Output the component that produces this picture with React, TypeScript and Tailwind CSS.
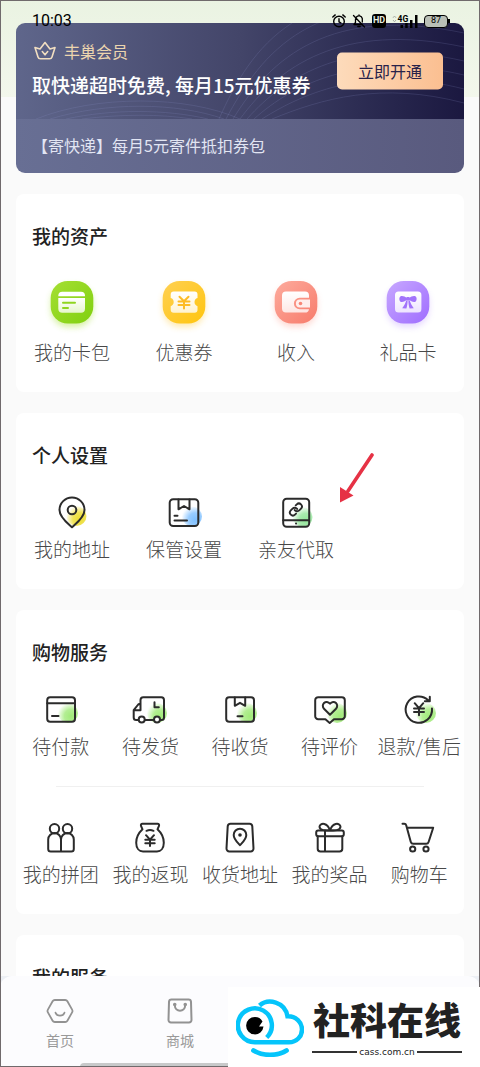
import type { ReactNode } from "react";

const INK = "#2b2b2b";

function LineIcon({ glow, glowAt = [25, 21], children }: { glow?: string; glowAt?: number[]; children: ReactNode }) {
  const id = glow ? `glow-${glow.slice(1)}` : undefined;
  return (
    <svg viewBox="0 0 36 36" className="size-9 overflow-visible" fill="none" stroke={INK} strokeWidth="2" strokeLinecap="round" strokeLinejoin="round" aria-hidden="true">
      {glow && (
        <>
          <defs>
            <radialGradient id={id} cx="0.66" cy="0.66" r="0.68">
              <stop offset="0" stopColor={glow} stopOpacity="1" />
              <stop offset="0.5" stopColor={glow} stopOpacity="0.8" />
              <stop offset="1" stopColor={glow} stopOpacity="0.05" />
            </radialGradient>
          </defs>
          <circle cx={glowAt[0]} cy={glowAt[1]} r="10" fill={`url(#${id})`} stroke="none" />
        </>
      )}
      {children}
    </svg>
  );
}

function BadgeIcon({ id, from, to, children }: { id: string; from: string; to: string; children: ReactNode }) {
  return (
    <svg viewBox="0 0 44 44" className="size-11 overflow-visible" fill="none" strokeLinecap="round" strokeLinejoin="round" aria-hidden="true">
      <defs>
        <linearGradient id={id} x1="0" y1="0" x2="1" y2="1">
          <stop offset="0" stopColor={from} />
          <stop offset="1" stopColor={to} />
        </linearGradient>
        <linearGradient id={`${id}-paper`} x1="0" y1="0" x2="0" y2="1">
          <stop offset="0" stopColor="#ffffff" />
          <stop offset="1" stopColor="#ffffff" stopOpacity="0.78" />
        </linearGradient>
        <filter id={`${id}-shadow`} x="-30%" y="-30%" width="160%" height="160%">
          <feGaussianBlur stdDeviation="3" />
        </filter>
      </defs>
      <rect x="1" y="4" width="42" height="42" rx="17" fill={from} opacity="0.45" filter={`url(#${id}-shadow)`} />
      <rect x="0.7" y="0" width="42.6" height="42.6" rx="17" fill={`url(#${id})`} />
      {children}
    </svg>
  );
}

const assets = [
  {
    label: "我的卡包",
    icon: (
      <BadgeIcon id="wallet-card" from="#a5df33" to="#80d010">
        <path d="M8.3 15.2v-.5a4 4 0 0 1 4-4H31a4 4 0 0 1 4 4v.5z" fill="#fff" />
        <path d="M8.3 17H35v10.7a4 4 0 0 1-4 4H12.300a4 4 0 0 1-4-4z" fill="url(#wallet-card-paper)" />
        <path d="M13 21.800h12M13 27h5" stroke="#8fd51f" strokeWidth="2" />
      </BadgeIcon>
    ),
  },
  {
    label: "优惠券",
    icon: (
      <BadgeIcon id="coupon" from="#ffd052" to="#ffc50f">
        <path d="M11.700 10.600H32.500a3 3 0 0 1 3 3v3.400a4.300 4.300 0 0 0 0 8.200v3.500a3 3 0 0 1-3 3H11.700a3 3 0 0 1-3-3v-3.500a4.300 4.300 0 0 0 0-8.200v-3.400a3 3 0 0 1 3-3z" fill="url(#coupon-paper)" />
        <path d="m17.500 15.800 4.500 4.400 4.500-4.400M22 20.200v7.300M16.500 20.400h11M16.500 24h11" stroke="#fdbb25" strokeWidth="2" />
      </BadgeIcon>
    ),
  },
  {
    label: "收入",
    icon: (
      <BadgeIcon id="income" from="#fdab9d" to="#f77b6b">
        <path d="M12 10.600h19a4 4 0 0 1 4 4v2.200h-9.400a5.700 5.700 0 0 0 0 11.400H35a4 4 0 0 1-4 3.400H12a4 4 0 0 1-4-4v-13a4 4 0 0 1 4-4z" fill="url(#income-paper)" />
        <path d="M36 18.400H26a4.100 4.100 0 0 0 0 8.200h10z" fill="#fff" opacity="0.85" />
        <circle cx="26.500" cy="22.500" r="1.800" fill="#f88676" />
      </BadgeIcon>
    ),
  },
  {
    label: "礼品卡",
    icon: (
      <BadgeIcon id="gift-card" from="#c7a8ff" to="#9f6cff">
        <rect x="9" y="10.600" width="26.400" height="21" rx="3.500" fill="url(#gift-card-paper)" />
        <path d="M21 17.500c-2-2-4.500-2.800-6.300-2.200-2 .8-1.700 5.300.5 5.700 2 .3 4.300-.8 5.800-2.500zM23 17.500c2-2 4.500-2.800 6.300-2.200 2 .8 1.700 5.300-.5 5.700-2 .3-4.300-.8-5.800-2.500z" fill="#a273fb" />
        <rect x="19.800" y="16" width="4.400" height="3.600" rx="1.500" fill="#a273fb" />
        <path d="M20.200 19.500c-.8 3-2 5.200-4 7.700l4.200.2c.8-2.500 1.300-5 1.200-7.900zM23.800 19.500c.8 3 2 5.200 4 7.700l-4.200.2c-.8-2.500-1.300-5-1.200-7.900z" fill="#a273fb" />
      </BadgeIcon>
    ),
  },
];

const settings = [
  {
    label: "我的地址",
    icon: (
      <LineIcon glow="#ecdc30" glowAt={[22.500, 21]}>
        <path d="M18 32.300C14 28.500 5.500 22.500 5.500 15a12.500 12.500 0 0 1 25 0c0 7.500-8.500 13.500-12.500 17.300z" />
        <circle cx="18" cy="15" r="4.300" />
      </LineIcon>
    ),
  },
  {
    label: "保管设置",
    icon: (
      <LineIcon glow="#7fc0ff" glowAt={[26, 21.500]}>
        <rect x="3.700" y="4.300" width="28.600" height="26.800" rx="3.500" />
        <path d="M12.500 4.500v9.800l5.500-3.300 5.500 3.300V4.500M8.500 20.800h3M8.500 25.500h12.500" />
      </LineIcon>
    ),
  },
  {
    label: "亲友代取",
    icon: (
      <LineIcon glow="#93e59a" glowAt={[24.500, 22]}>
        <rect x="5.200" y="3.800" width="26" height="28" rx="3.500" />
        <path d="M5.200 25.200h26M18 28.600h.1" />
        <g transform="translate(10.700 7.300) scale(.6)" strokeWidth="3.200">
          <path d="M10 13a5 5 0 0 0 7.540.54l3-3a5 5 0 0 0-7.070-7.070l-1.720 1.710" />
          <path d="M14 11a5 5 0 0 0-7.540-.54l-3 3a5 5 0 0 0 7.070 7.070l1.710-1.710" />
        </g>
      </LineIcon>
    ),
  },
];

const orders = [
  {
    label: "待付款",
    icon: (
      <LineIcon glow="#a0ea78">
        <rect x="4.200" y="5.200" width="27.800" height="24.500" rx="3" />
        <path d="M4.200 11.200H32M9 24h6.500" />
      </LineIcon>
    ),
  },
  {
    label: "待发货",
    icon: (
      <LineIcon glow="#a0ea78">
        <path d="M6.300 28H4.200a2.500 2.500 0 0 1-2.500-2.500v-7.300l4.500-5.700 2.300-1V8A2.800 2.800 0 0 1 11.300 5.200h18A2.800 2.800 0 0 1 32 8v17.500a2.500 2.500 0 0 1-2.500 2.500h-1M13 28h8.700M1.700 18.200h6.800v-6.700M22.500 10.200v5h4.300" />
        <circle cx="9.700" cy="27.600" r="3" fill="#fff" />
        <circle cx="25" cy="27.600" r="3" fill="#fff" />
      </LineIcon>
    ),
  },
  {
    label: "待收货",
    icon: (
      <LineIcon glow="#a0ea78">
        <rect x="4.200" y="5.200" width="27.800" height="24.500" rx="3" />
        <path d="M12.800 5.400v8.400l5.200-3 5.200 3V5.400M15.500 24.300h5" />
      </LineIcon>
    ),
  },
  {
    label: "待评价",
    icon: (
      <LineIcon glow="#a0ea78">
        <path d="M6.200 5.200h23.600a3 3 0 0 1 3 3v16a3 3 0 0 1-3 3H22l-4.300 3.800-4.300-3.800H6.200a3 3 0 0 1-3-3v-16a3 3 0 0 1 3-3z" />
        <path d="M18 22.700l-6-6a4 4 0 0 1 0-5.700c1.700-1.600 4.200-1.500 6 .7 1.800-2.200 4.300-2.300 6-.7a4 4 0 0 1 0 5.700z" />
      </LineIcon>
    ),
  },
  {
    label: "退款/售后",
    icon: (
      <LineIcon glow="#a0ea78">
        <path d="M31 16.500A13.200 13.200 0 1 1 27.200 8.300M28.800 4.800v4.500h-5" />
        <path d="m13.700 11.200 4.300 5 4.300-5M18 16.200v7M13 16.500h10M13 20h10" />
      </LineIcon>
    ),
  },
];

const shopping = [
  {
    label: "我的拼团",
    icon: (
      <LineIcon>
        <circle cx="11.500" cy="8.800" r="4.700" />
        <circle cx="24.500" cy="8.800" r="4.700" />
        <path d="M18 19.500v12M18 19.500a6.300 6.300 0 0 0-12.800 0v9.500a2.500 2.500 0 0 0 2.500 2.500h20.600a2.500 2.500 0 0 0 2.500-2.500v-9.500a6.300 6.300 0 0 0-12.800 0z" />
      </LineIcon>
    ),
  },
  {
    label: "我的返现",
    icon: (
      <LineIcon>
        <path d="M10.500 9.300 9 5.800a1.500 1.500 0 0 1 1.400-2.100h15.200A1.500 1.500 0 0 1 27 5.800l-1.500 3.500c4 3.700 6.300 8.700 6.300 13.500 0 5.500-3 8.700-6.800 8.700H11c-3.800 0-6.800-3.200-6.800-8.700 0-4.800 2.300-9.800 6.300-13.500zM14.500 10.800c2-.9 5-.9 7 0" />
        <path d="m14 15.200 4 4.500 4-4.500M18 19.700V26M13.300 19.800h9.400M13.300 23.200h9.400" />
      </LineIcon>
    ),
  },
  {
    label: "收货地址",
    icon: (
      <LineIcon>
        <path d="M8.500 3.800h19a2.800 2.800 0 0 1 2.800 2.600l1.200 22a2.800 2.800 0 0 1-2.800 3H7.300a2.800 2.800 0 0 1-2.800-3l1.200-22a2.800 2.800 0 0 1 2.800-2.600z" />
        <path d="M18 25.200c-2-2.400-6.300-5.800-6.300-10.200a6.300 6.300 0 0 1 12.600 0c0 4.400-4.300 7.800-6.300 10.200z" />
        <circle cx="18" cy="15" r="1.800" fill={INK} stroke="none" />
      </LineIcon>
    ),
  },
  {
    label: "我的奖品",
    icon: (
      <LineIcon>
        <rect x="4.200" y="10.500" width="27.600" height="5.700" rx="2" />
        <path d="M5.700 16.200v12.500a2.800 2.800 0 0 0 2.800 2.800h19a2.800 2.800 0 0 0 2.800-2.800V16.200M13 10.500v21" />
        <path d="M18 10.300C13.500 10.800 7.700 10.500 7.500 6.800 7.500 4.500 10 3.400 12.300 4c3 .8 4.700 3.500 5.700 6.300zM18 10.300c4.500.5 10.300.2 10.500-3.500 0-2.300-2.500-3.400-4.800-2.800-3 .8-4.700 3.500-5.700 6.300z" />
      </LineIcon>
    ),
  },
  {
    label: "购物车",
    icon: (
      <LineIcon>
        <path d="M1.500 3.800h1.800a2 2 0 0 1 1.900 1.500L9.800 22a2.500 2.500 0 0 0 2.400 1.800h13a2.500 2.500 0 0 0 2.400-1.800L32.200 7.700H6" />
        <circle cx="11.700" cy="29" r="2.600" />
        <circle cx="25" cy="29" r="2.600" />
      </LineIcon>
    ),
  },
];

type Item = { label: string; icon: ReactNode };

function IconRow({ items, columns, gap }: { items: Item[]; columns: string; gap: string }) {
  return (
    <ul className={`grid ${columns}`}>
      {items.map((item) => (
        <li key={item.label}>
          <button type="button" className={`flex w-full flex-col items-center whitespace-nowrap ${gap}`}>
            {item.icon}
            <span className="flex w-full justify-center text-[19px] leading-6 font-light text-[#484848]">{item.label}</span>
          </button>
        </li>
      ))}
    </ul>
  );
}

function Panel({ title, children }: { title: string; children?: ReactNode }) {
  return (
    <section className="relative rounded-lg bg-white pt-[26px] pb-7">
      <h2 className="px-4 text-[19px] leading-8 font-medium text-[#222]">{title}</h2>
      {children}
    </section>
  );
}

function StatusBar() {
  return (
    <header className="absolute inset-x-0 top-0 z-10 flex items-center justify-between pt-[9px] pr-[30px] pl-8 text-black">
      <time className="font-['Roboto',sans-serif] text-[16px] leading-6">10:03</time>
      <div className="flex items-center gap-1.5">
        <svg viewBox="0 0 14 14" className="size-3.5" fill="none" stroke="currentColor" strokeWidth="1.4" strokeLinecap="round" aria-hidden="true">
          <circle cx="7" cy="7.500" r="5.300" />
          <path d="M7 4.800v3l1.800 1M.8 3 3.200.9M13.200 3 10.800.9" />
        </svg>
        <svg viewBox="0 0 14 14" className="size-3.5" fill="none" stroke="currentColor" strokeWidth="1.3" strokeLinecap="round" strokeLinejoin="round" aria-hidden="true">
          <path d="M4.500 3C6 1.200 9.500 1.500 10.300 4.500V8M3.500 4.800v3.700L2 10.500h8.500M5.800 12.500h2.400M7 .8v.8M1.500 1.500l11 11.500" />
        </svg>
        <span className="flex h-3.5 w-3.5 items-center justify-center rounded-[3px] bg-black font-['Roboto',sans-serif] text-[9px] font-bold text-[#e5ebdf]">HD</span>
        <svg viewBox="0 0 26 14" className="h-3.5 w-[26px]" aria-hidden="true">
          <path d="M1 3.800 2.500 2 4 3.800M1 6l1.500 1.800L4 6" fill="none" stroke="#a9aea3" />
          <path d="M8.500 11H11v3H8.500zM13.200 9h2.500v5h-2.500zM18 6h2.500v8H18zM23 1h2.500v13H23z" fill="currentColor" />
          <text x="5.500" y="7.500" fontFamily="Roboto, sans-serif" fontSize="8.500" fontWeight="700" fill="currentColor">4G</text>
        </svg>
        <div className="flex items-center">
          <span className="flex h-[13px] w-6 items-center justify-center rounded-[4px] border-[1.5px] border-black bg-[#b9bfb6] font-['Roboto',sans-serif] text-[9px] text-black">87</span>
          <span className="h-1 w-0.5 bg-black" />
        </div>
      </div>
    </header>
  );
}

function MemberCard() {
  return (
    <section className="overflow-hidden rounded-[9px]">
      <div className="relative flex h-24 items-center justify-between bg-linear-to-r from-[#5f668b] via-[#434569] via-50% to-[#1b1840] pr-[21px] pl-4">
        <svg viewBox="0 0 448 96" preserveAspectRatio="none" className="absolute inset-0 size-full" fill="none" stroke="#8f98cf" strokeOpacity="0.18" aria-hidden="true">
          <path d="M210 96C245 30 300-40 448-4M217 96C255 34 315-18 448 10M224 96C262 44 325-2 448 24M231 96C270 52 335 12 448 38M238 96C278 60 345 28 448 52M246 96C290 68 355 42 448 66M256 96C305 76 365 58 448 80M203 96C235 24 285-50 448-20" />
          <path d="M20 96C80 72 170 72 224 96M34 96C90 79 160 79 208 96M50 96C95 86 150 86 192 96M66 96C105 91 145 91 176 96" />
        </svg>
        <div className="relative flex flex-col gap-1.5 pb-0.5">
          <div className="flex items-center gap-2 pl-0.5">
            <svg viewBox="0 0 22 20" className="h-5 w-[22px]" fill="none" stroke="#f1dec1" strokeWidth="1.600" strokeLinecap="round" strokeLinejoin="round" aria-hidden="true">
              <path d="M1 6.500 6 8l5-6.500L16 8l5-1.500-3 9.500a2.500 2.500 0 0 1-2.400 1.800H6.400A2.500 2.500 0 0 1 4 16z" />
              <path d="m8.300 10.500 2.700 3.300 2.700-3.300" />
            </svg>
            <span className="text-[16px] leading-6 text-[#ecd5ae]">丰巢会员</span>
          </div>
          <h1 className="text-[19px] leading-8 font-medium whitespace-nowrap text-white">取快递超时免费, 每月15元优惠券</h1>
        </div>
        <button type="button" className="absolute top-1/2 right-[21px] -translate-y-1/2 rounded-[5px] bg-linear-to-r from-[#fddbbb] to-[#fbbf91] px-[21px] py-1.5 text-[16px] leading-[25px] whitespace-nowrap text-[#28224a]">
          立即开通
        </button>
      </div>
      <p className="bg-linear-to-r from-[#686f94] to-[#595a7e] px-4 pt-[14px] pb-4 text-[16px] leading-6 text-[#e2e5f3]">【寄快递】每月5元寄件抵扣券包</p>
    </section>
  );
}

function TabBar() {
  return (
    <div className="relative shrink-0 bg-[#eceff4]">
      <nav className="flex rounded-t-xl bg-[#fcfcfe] pt-[21px] pb-[15px] text-[#999]">
        <a href="#home" className="flex w-1/4 flex-col items-center gap-[3px]">
          <svg viewBox="0 0 28 28" className="size-7" fill="none" stroke="#929292" strokeWidth="1.800" strokeLinecap="round" strokeLinejoin="round" aria-hidden="true">
            <path d="M8.800 3h10.400a2.500 2.500 0 0 1 2.200 1.300l4.700 8.300a2.800 2.800 0 0 1 0 2.800l-4.700 8.300a2.500 2.500 0 0 1-2.200 1.300H8.800a2.500 2.500 0 0 1-2.200-1.300l-4.700-8.300a2.800 2.800 0 0 1 0-2.800l4.700-8.300A2.500 2.500 0 0 1 8.800 3z" />
            <path d="M9.500 15.700c1.500 4 7.500 4 9 0" />
          </svg>
          <span className="text-[14px] leading-6">首页</span>
        </a>
        <a href="#mall" className="flex w-1/4 flex-col items-center gap-[3px]">
          <svg viewBox="0 0 28 28" className="size-7" fill="none" stroke="#929292" strokeWidth="2" strokeLinecap="round" strokeLinejoin="round" aria-hidden="true">
            <path d="M5.500 2.500h17a2.500 2.500 0 0 1 2.500 2.400l.5 18a2.500 2.500 0 0 1-2.500 2.600H5a2.500 2.500 0 0 1-2.500-2.600l.5-18a2.500 2.500 0 0 1 2.500-2.400z" />
            <path d="M8.800 8c0 7.500 10.400 7.500 10.400 0" />
            <path d="M8.700 7.500h.1M19.200 7.500h.1" strokeWidth="3.500" />
          </svg>
          <span className="text-[14px] leading-6">商城</span>
        </a>
      </nav>
      <div className="absolute inset-x-0 bottom-0 flex justify-center">
        <div className="h-1 w-2/3 rounded-tl bg-[#c8c9ca]" />
      </div>
    </div>
  );
}

function SiteMark() {
  return (
    <aside className="absolute right-0 bottom-0 z-30 flex h-20 w-[252px] items-start gap-2 bg-white pl-2">
      <svg viewBox="0 0 68 58" className="mt-3 h-[58px] w-[68px] shrink-0" fill="none" stroke="#05c5fb" strokeWidth="4.500" strokeLinecap="round" aria-hidden="true">
        <path d="M23.500 6.500C32-1 49 2.500 51.500 17.300 60 17 66 23.500 66 30.500c0 7-5.500 12.800-13 12.800H19A17 17 0 1 1 30.700 38.500" strokeLinecap="butt" />
        <path d="M17.500 51.500c9 5.700 24 5.700 33 0" strokeWidth="4.800" />
        <path d="M19 18a8.700 8.700 0 1 0 8.500 9.600h-4.500l3.500-5.200A8.700 8.700 0 0 0 19 18z" fill="#000" stroke="none" />
      </svg>
      <div className="flex w-[150px] flex-col items-center pt-1.5">
        <strong className="text-[37px] leading-[53px] font-black whitespace-nowrap text-[#222]">社科在线</strong>
        <div className="flex w-full items-center gap-0.5">
          <span className="h-0.5 flex-1 bg-[#333]" />
          <span className="font-['DejaVu_Sans',sans-serif] text-[9px] leading-3 text-[#222]">cass.com.cn</span>
          <span className="h-0.5 flex-1 bg-[#333]" />
        </div>
      </div>
    </aside>
  );
}

export default function App() {
  return (
    <div className="relative flex h-screen flex-col overflow-hidden bg-[#fafafa] font-['Noto_Sans_CJK_SC',sans-serif]">
      <div className="absolute inset-x-0 top-0 h-[97px] bg-linear-to-b from-[#eaf3e2] to-[#f3f7ec]" />
      <StatusBar />
      <main className="relative flex min-h-0 flex-1 flex-col gap-[21px] overflow-hidden px-4 pt-[23px] *:shrink-0">
        <MemberCard />
        <Panel title="我的资产">
          <div className="pt-[29px]">
            <IconRow items={assets} columns="grid-cols-4" gap="gap-[15px]" />
          </div>
        </Panel>
        <Panel title="个人设置">
          <div className="pt-6">
            <IconRow items={settings} columns="grid-cols-4" gap="gap-1.5" />
          </div>
          <svg viewBox="0 0 36 50" className="absolute top-10 left-[72%] h-[50px] w-9" aria-hidden="true">
            <path d="M33 2 9 38" stroke="#e63245" strokeWidth="3.600" strokeLinecap="round" />
            <path d="M1 49.500V34l13.500 8.500z" fill="#e63245" />
          </svg>
        </Panel>
        <Panel title="购物服务">
          <div className="pt-6">
            <IconRow items={orders} columns="grid-cols-5" gap="gap-1.5" />
          </div>
          <hr className="mx-10 mt-7 mb-[33px] border-[#f0f0f0]" />
          <IconRow items={shopping} columns="grid-cols-5" gap="gap-1.5" />
        </Panel>
        <Panel title="我的服务" />
      </main>
      <TabBar />
      <div className="pointer-events-none absolute inset-0 z-20 border border-[#706a6c]" />
      <SiteMark />
    </div>
  );
}
